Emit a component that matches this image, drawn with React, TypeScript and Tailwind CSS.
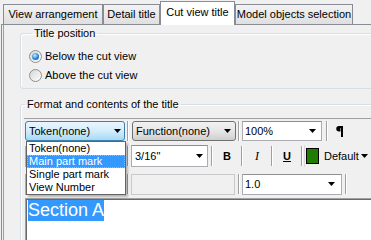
import React from "react";

function Arrow() {
  return (
    <svg width="7" height="4" viewBox="0 0 7 4" className="shrink-0">
      <path d="M0 0h7L3.5 4z" fill="#000" />
    </svg>
  );
}

function Sep({ className = "h-[20px]" }: { className?: string }) {
  return <div className={`w-[2px] shrink-0 border-l border-r border-l-[#a0a0a0] border-r-white ${className}`} />;
}

function Tab({ label, width, active }: { label: string; width: string; active?: boolean }) {
  if (active) {
    return (
      <div
        className={`relative z-10 -mb-px flex h-[24px] items-center justify-center border border-b-0 border-[#898c95] bg-white pb-[2px] ${width}`}
      >
        {label}
      </div>
    );
  }
  return (
    <div
      className={`flex h-[20px] items-center justify-center border border-b-0 border-[#898c95] bg-gradient-to-b from-[#f3f3f3] to-[#dfdfdf] ${width}`}
    >
      {label}
    </div>
  );
}

function Radio({ label, checked }: { label: string; checked?: boolean }) {
  return (
    <div className="flex h-[19px] items-center">
      <span className="flex h-[13px] w-[13px] items-center justify-center rounded-full border border-[#8e8f8f] bg-gradient-to-br from-[#d6d6d6] to-white">
        {checked && (
          <span className="h-[7px] w-[7px] rounded-full bg-[radial-gradient(circle_at_40%_35%,#c4ecff,#2b86d9_55%,#133f86)]" />
        )}
      </span>
      <span className="ml-[3px]">{label}</span>
    </div>
  );
}

function Pilcrow() {
  return (
    <svg width="7" height="12" viewBox="0 0 7 12">
      <path d="M3 1h4v11H5V3H4.5v3.5H3a2.7 2.7 0 0 1 0-5.5z" fill="#000" />
    </svg>
  );
}

const listItems = ["Token(none)", "Main part mark", "Single part mark", "View Number"];

export default function App() {
  return (
    <div className="relative h-[240px] w-[371px] overflow-hidden bg-[#f0f0f0] pl-[1px] font-['Liberation_Sans',Arial,sans-serif] text-[11px] leading-[13px] text-black">
      <div className="flex h-[24px] items-end pl-[2px]">
        <Tab label="View arrangement" width="w-[100px]" />
        <Tab label="Detail title" width="w-[57px]" />
        <Tab label="Cut view title" width="w-[75px]" active />
        <Tab label="Model objects selection" width="w-[118px]" />
      </div>

      <div className="h-[220px] border-l border-t border-[#898c95]">
        <div className="ml-[1px] h-full border-l border-[#a0a0a0] pl-[16px] pt-[2px]">
          <fieldset className="w-[380px] rounded-[3px] border border-[#d5dfe5] pb-[3px] pl-[8px] shadow-[inset_1px_1px_0_#fff]">
            <legend className="ml-[3px] px-[2px]">Title position</legend>
            <div className="pt-[7px]">
              <Radio label="Below the cut view" checked />
              <Radio label="Above the cut view" />
            </div>
          </fieldset>

          <fieldset className="mt-[9px] h-[200px] w-[380px] rounded-[3px] border border-[#d5dfe5] shadow-[inset_1px_1px_0_#fff]">
            <legend className="ml-[4px] px-[2px]">Format and contents of the title</legend>
            <div className="ml-[3px] mt-[7px] border-t border-[#a0a0a0] pl-[1px]">
              {/* row 1 */}
              <div className="mt-[2px] flex h-[20px] items-center">
                <div className="flex h-[20px] w-[100px] items-center justify-between rounded-[3px] border border-[#3c7fb1] bg-gradient-to-b from-[#eaf6fd] via-[#d2edfb] to-[#a7d9f5] pl-[3px] pr-[3px]">
                  <span>Token(none)</span>
                  <Arrow />
                </div>
                <Sep className="ml-[2px] h-[20px]" />
                <div className="ml-[3px] flex h-[20px] w-[104px] items-center justify-between rounded-[3px] border border-[#707070] bg-gradient-to-b from-[#f2f2f2] via-[#e6e6e6] to-[#cfcfcf] pl-[3px] pr-[4px]">
                  <span>Function(none)</span>
                  <Arrow />
                </div>
                <Sep className="ml-[2px] h-[20px]" />
                <div className="ml-[2px] flex h-[20px] w-[80px] items-center justify-between border border-[#abadb3] border-t-[#8e8f8f] bg-white pl-[2px] pr-[5px]">
                  <span>100%</span>
                  <Arrow />
                </div>
                <Sep className="ml-[4px] h-[20px]" />
                <div className="ml-[8px] flex items-center">
                  <Pilcrow />
                </div>
              </div>

              {/* row 2 */}
              <div className="mt-[4px] flex h-[22px] items-center">
                <div className="flex h-[21px] w-[100px] items-center justify-end border border-[#abadb3] bg-white pr-[4px]">
                  <Arrow />
                </div>
                <Sep className="ml-[2px] h-[20px]" />
                <div className="ml-[2px] flex h-[22px] w-[77px] items-center justify-between border border-[#abadb3] border-t-[#8e8f8f] bg-white pl-[3px] pr-[4px]">
                  <span>3/16"</span>
                  <Arrow />
                </div>
                <Sep className="ml-[3px] h-[20px]" />
                <div className="flex h-[22px] w-[28px] items-center justify-center font-bold">B</div>
                <Sep className="h-[20px]" />
                <div className="flex h-[22px] w-[28px] items-center justify-center font-['Liberation_Serif',serif] text-[12px] italic">I</div>
                <Sep className="h-[20px]" />
                <div className="flex h-[22px] w-[28px] items-center justify-center font-bold underline">U</div>
                <Sep className="h-[20px]" />
                <div className="ml-[1px] flex h-[22px] w-[80px] items-center border-l border-[#d9d9d9] pl-[1px]">
                  <span className="h-[16px] w-[13px] border border-black bg-[#1f7d00]" />
                  <span className="ml-[5px] w-[37px]">Default</span>
                  <Arrow />
                </div>
              </div>

              {/* row 3 */}
              <div className="mt-[6px] flex h-[22px] items-center">
                <div className="h-[21px] w-[100px] border border-[#abadb3] bg-white" />
                <Sep className="ml-[2px] h-[20px]" />
                <div className="ml-[2px] h-[21px] w-[104px] border border-[#c9c9c9] bg-[#f0f0f0]" />
                <Sep className="ml-[3px] h-[20px]" />
                <div className="ml-[2px] flex h-[21px] w-[100px] items-center justify-between border border-[#abadb3] border-t-[#8e8f8f] bg-white pl-[2px] pr-[6px]">
                  <span>1.0</span>
                  <Arrow />
                </div>
                <Sep className="ml-[3px] h-[20px]" />
              </div>

              {/* text area */}
              <div className="mt-[3px] h-[60px] border-l border-t border-[#a0a0a0]">
                <div className="h-full border-l border-t border-[#696969] bg-white pl-[1px]">
                  <span className="inline-block bg-[#3399ff] text-[18px] leading-[21px] text-white">Section A</span>
                </div>
              </div>
            </div>
          </fieldset>
        </div>
      </div>

      {/* open dropdown list */}
      <div className="absolute left-[26px] top-[141px] w-[100px] border border-[#646464] bg-white shadow-[2px_2px_2px_rgba(0,0,0,0.25)]">
        {listItems.map((item, i) => (
          <div
            key={item}
            className={`flex h-[13px] items-center border pl-[1px] ${
              i === 1 ? "border-dotted border-[#f0b040] bg-[#3399ff] text-white" : "border-transparent"
            }`}
          >
            {item}
          </div>
        ))}
      </div>
    </div>
  );
}
